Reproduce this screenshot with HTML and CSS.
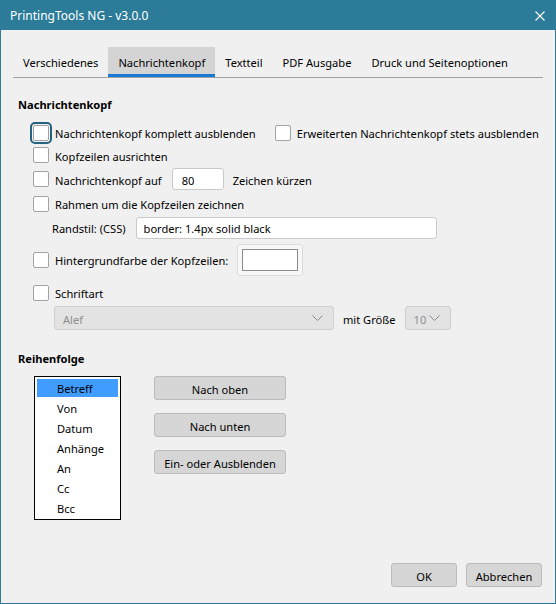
FILE: index.html
```html
<!DOCTYPE html>
<html lang="de">
<head>
<meta charset="utf-8">
<title>PrintingTools NG - v3.0.0</title>
<link rel="stylesheet" href="styles.css">
</head>
<body>
<div class="window">
  <header class="titlebar">
    <span class="title">PrintingTools NG - v3.0.0</span>
    <svg class="close" width="10" height="10" viewBox="0 0 10 10"><path d="M0.5 0.5L9.5 9.5M9.5 0.5L0.5 9.5" stroke="#fff" stroke-width="1.1"/></svg>
  </header>

  <main class="content">
    <nav class="tabs">
      <span class="tab">Verschiedenes</span>
      <span class="tab active">Nachrichtenkopf</span>
      <span class="tab">Textteil</span>
      <span class="tab">PDF Ausgabe</span>
      <span class="tab">Druck und Seitenoptionen</span>
    </nav>

    <section class="group">
      <h2 class="heading">Nachrichtenkopf</h2>

      <div class="row r1">
        <label class="check"><span class="box focus"></span><span class="txt">Nachrichtenkopf komplett ausblenden</span></label>
        <label class="check second"><span class="box"></span><span class="txt">Erweiterten Nachrichtenkopf stets ausblenden</span></label>
      </div>
      <div class="row r2">
        <label class="check"><span class="box"></span><span class="txt">Kopfzeilen ausrichten</span></label>
      </div>
      <div class="row r3">
        <label class="check"><span class="box"></span><span class="txt">Nachrichtenkopf auf</span></label>
        <span class="field num"><span class="txt">80</span></span>
        <span class="after txt">Zeichen kürzen</span>
      </div>
      <div class="row r4">
        <label class="check"><span class="box"></span><span class="txt">Rahmen um die Kopfzeilen zeichnen</span></label>
      </div>
      <div class="row r5">
        <span class="sublabel txt">Randstil: (CSS)</span>
        <span class="field css"><span class="txt">border: 1.4px solid black</span></span>
      </div>
      <div class="row r6">
        <label class="check"><span class="box"></span><span class="txt">Hintergrundfarbe der Kopfzeilen:</span></label>
        <span class="swatch"><span class="swatch-inner"></span></span>
      </div>
      <div class="row r7">
        <label class="check"><span class="box"></span><span class="txt">Schriftart</span></label>
      </div>
      <div class="row r8">
        <span class="select font"><span class="txt">Alef</span><svg class="chev" width="11" height="6" viewBox="0 0 11 6"><path d="M0.5 0.5L5.5 5.5L10.5 0.5" fill="none" stroke="#8a8a8a"/></svg></span>
        <span class="after txt">mit Größe</span>
        <span class="select size"><span class="txt">10</span><svg class="chev" width="11" height="6" viewBox="0 0 11 6"><path d="M0.5 0.5L5.5 5.5L10.5 0.5" fill="none" stroke="#8a8a8a"/></svg></span>
      </div>
    </section>

    <section class="group order">
      <h2 class="heading">Reihenfolge</h2>
      <div class="order-body">
        <ul class="listbox">
          <li class="selected">Betreff</li>
          <li>Von</li>
          <li>Datum</li>
          <li>Anhänge</li>
          <li>An</li>
          <li>Cc</li>
          <li>Bcc</li>
        </ul>
        <div class="order-buttons">
          <button class="btn wide">Nach oben</button>
          <button class="btn wide">Nach unten</button>
          <button class="btn wide">Ein- oder Ausblenden</button>
        </div>
      </div>
    </section>
  </main>

  <footer class="actions">
    <button class="btn ok">OK</button>
    <button class="btn cancel">Abbrechen</button>
  </footer>
</div>
</body>
</html>
```
FILE: styles.css
```css
* { box-sizing: border-box; }

body {
  margin: 0;
  font-family: "Noto Sans", "Open Sans", sans-serif;
  font-size: 11.1px;
  color: #000;
}

.window {
  width: 556px;
  height: 604px;
  background: #f0f0f0;
  border: 1px solid #2c7c99;
  border-top: 0;
  display: flex;
  flex-direction: column;
}

/* title bar */
.titlebar {
  height: 30px;
  background: #2c7c99;
  color: #fff;
  font-size: 12px;
  display: flex;
  align-items: center;
  justify-content: space-between;
  padding: 1px 10px 0 9px;
}
.close { display: block; }

.content {
  padding: 17px 12px 0 12px;
}

/* tabs */
.tabs {
  display: flex;
  border-bottom: 1px solid #a0a0a0;
}
.tab {
  height: 30px;
  padding: 3px 10px 0;
  line-height: 25px;
  border-bottom: 3px solid transparent;
  white-space: nowrap;
}
.tab.active {
  background: #d4d4d4;
  border-bottom-color: #1a78d6;
}

/* groups */
.group {
  padding-left: 5px;
}
.heading {
  margin: 19px 0 0;
  font-size: 11.1px;
  font-weight: 700;
  line-height: 16px;
}

.row {
  display: flex;
  align-items: center;
  padding-left: 15px;
}
.r1 { margin-top: 8px; height: 23px; }
.r2 { height: 22px; }
.r3 { height: 26px; }
.r4 { height: 23px; }
.r5 { height: 25px; }
.r6 { height: 39px; }
.r7 { height: 27px; }
.r8 { height: 24px; padding-left: 36px; }

/* nudges glyphs down a pixel within centred rows */
.txt { padding-top: 2px; }

.check {
  display: flex;
  align-items: center;
  gap: 6px;
  white-space: nowrap;
}
.check.second { margin-left: 19px; }

.box {
  width: 16px;
  height: 16px;
  background: #fff;
  border: 1px solid #a3a3a3;
  border-radius: 2px;
  flex: none;
}
.box.focus {
  outline: 2px solid #24627f;
  outline-offset: 1px;
}

.field {
  height: 22px;
  background: #fff;
  border: 1px solid #c9c9c9;
  border-radius: 3px;
  display: flex;
  align-items: center;
  white-space: nowrap;
}
.num {
  width: 52px;
  padding-left: 9px;
  margin-left: 10px;
}
.css {
  width: 301px;
  padding-left: 7px;
  margin-left: 10px;
}
.after {
  margin-left: 9px;
  white-space: nowrap;
}
.sublabel {
  padding-left: 19px;
  white-space: nowrap;
}

.swatch {
  width: 66px;
  height: 32px;
  margin-left: 9px;
  background: #f7f7f7;
  border: 1px solid #dcdcdc;
  border-radius: 3px;
  padding: 4px;
}
.swatch-inner {
  display: block;
  height: 100%;
  background: #fff;
  border: 1px solid #8c8c8c;
}

.select {
  height: 24px;
  background: #e3e3e3;
  border: 1px solid #cfcfcf;
  border-radius: 3px;
  color: #8e8e8e;
  display: flex;
  align-items: center;
  justify-content: space-between;
}
.select.font {
  width: 280px;
  padding: 0 10px 0 8px;
}
.select.size {
  width: 46px;
  padding: 0 10px 0 8px;
  margin-left: 9px;
}

/* order list */
.order .heading { margin-top: 21px; }
.order-body {
  display: flex;
  align-items: flex-start;
  gap: 33px;
  margin-top: 9px;
  padding-left: 16px;
}
.listbox {
  list-style: none;
  margin: 0;
  width: 87px;
  height: 144px;
  background: #fff;
  border: 1px solid #000;
  padding: 1px 2px;
}
.listbox li {
  height: 20px;
  line-height: 18px;
  padding: 2px 0 0 20px;
}
.listbox li.selected {
  background: #409cff;
  height: 18px;
  line-height: 18px;
  padding-top: 1px;
  margin: 1px 0;
}

.order-buttons {
  display: flex;
  flex-direction: column;
  gap: 13px;
}

.btn {
  font: inherit;
  color: #000;
  height: 24px;
  background: #d6d6d6;
  border: 1px solid #bcbcbc;
  border-radius: 3px;
  padding: 2px 0 0;
}
.btn.wide { width: 132px; }

.actions {
  margin-top: auto;
  display: flex;
  justify-content: flex-end;
  gap: 9px;
  padding: 0 13px 16px 0;
}
.btn.ok { width: 66px; }
.btn.cancel { width: 76px; }
```
